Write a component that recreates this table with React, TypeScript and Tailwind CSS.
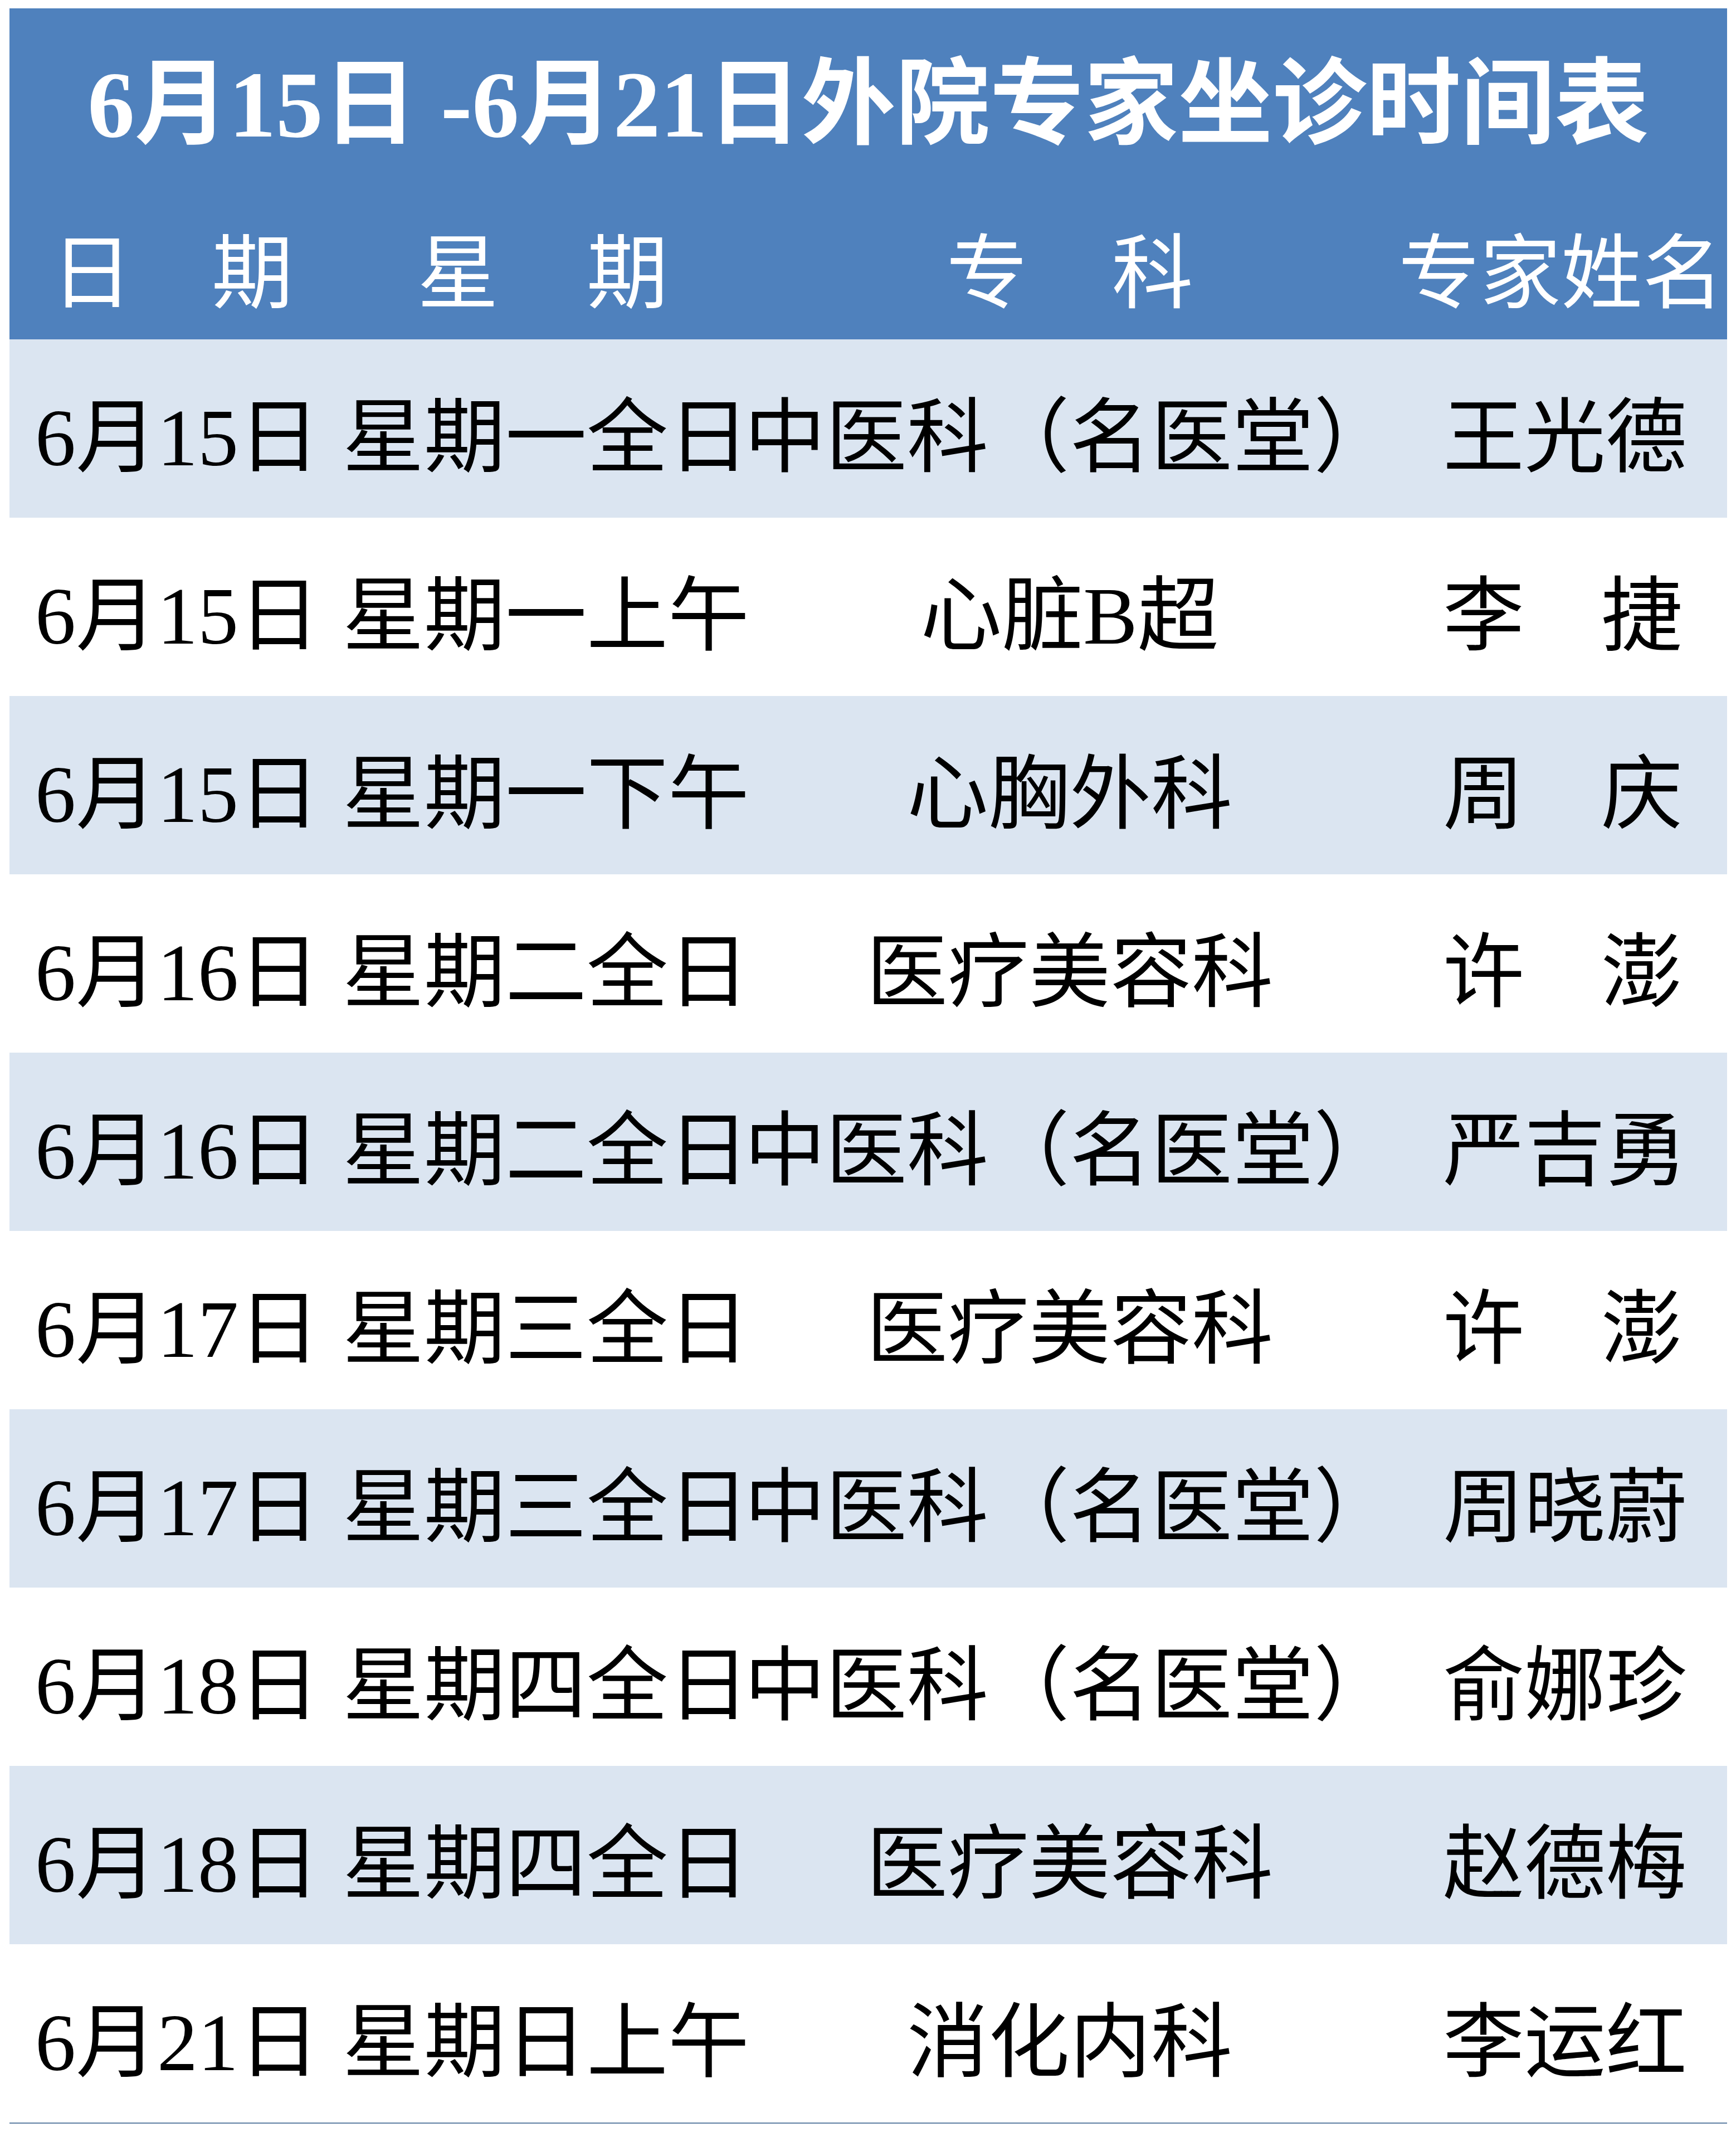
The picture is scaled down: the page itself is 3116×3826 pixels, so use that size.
const font = { fontFamily: '"Liberation Serif", "Noto Sans CJK SC", serif' };

const rows = [
  ["6月15日", "星期一全日", "中医科（名医堂）", "王光德"],
  ["6月15日", "星期一上午", "心脏B超", "李捷"],
  ["6月15日", "星期一下午", "心胸外科", "周庆"],
  ["6月16日", "星期二全日", "医疗美容科", "许澎"],
  ["6月16日", "星期二全日", "中医科（名医堂）", "严吉勇"],
  ["6月17日", "星期三全日", "医疗美容科", "许澎"],
  ["6月17日", "星期三全日", "中医科（名医堂）", "周晓蔚"],
  ["6月18日", "星期四全日", "中医科（名医堂）", "俞娜珍"],
  ["6月18日", "星期四全日", "医疗美容科", "赵德梅"],
  ["6月21日", "星期日上午", "消化内科", "李运红"],
];

// spread characters across a fixed box, like Excel's distributed alignment
const Spread = ({ text, className }: { text: string; className: string }) => (
  <div className={`flex justify-between ${className}`}>
    {text.split("").map((c, i) => (
      <span key={i}>{c}</span>
    ))}
  </div>
);

const App = () => {
  return (
    <div className="w-[3116px] h-[3826px] bg-white pt-[15px] pl-[17px]" style={font}>
      <div className="w-[3083px]">
        {/* Header */}
        <div className="bg-[#4f81bd] text-white">
          <div className="h-[330px] flex items-center justify-center text-[169px] font-bold leading-none pt-[16px]">
            6月15日 -6月21日外院专家坐诊时间表
          </div>
          <div className="h-[264px] grid grid-cols-[598px_715px_1180px_590px] items-center text-[146px] leading-none pt-[30px]">
            <Spread text="日期" className="ml-[75px] w-[434px]" />
            <Spread text="星期" className="ml-[134px] w-[450px]" />
            <Spread text="专科" className="mx-auto w-[443px]" />
            <div className="whitespace-nowrap">专家姓名</div>
          </div>
        </div>

        {/* Body */}
        {rows.map((r, i) => (
          <div
            key={i}
            className={`h-[320px] grid grid-cols-[598px_715px_1180px_590px] items-center text-[146px] leading-none text-black pt-[34px] ${
              i % 2 === 0 ? "bg-[#dbe5f1]" : "bg-white"
            }`}
          >
            <div className="pl-[46px] whitespace-nowrap">{r[0]}</div>
            <div className="whitespace-nowrap">{r[1]}</div>
            <div className="text-center whitespace-nowrap">{r[2]}</div>
            <Spread text={r[3]} className="ml-[80px] w-[430px]" />
          </div>
        ))}
        <div className="h-[2px] bg-[#5f7fa3]" />
      </div>
    </div>
  );
};

export default App;
